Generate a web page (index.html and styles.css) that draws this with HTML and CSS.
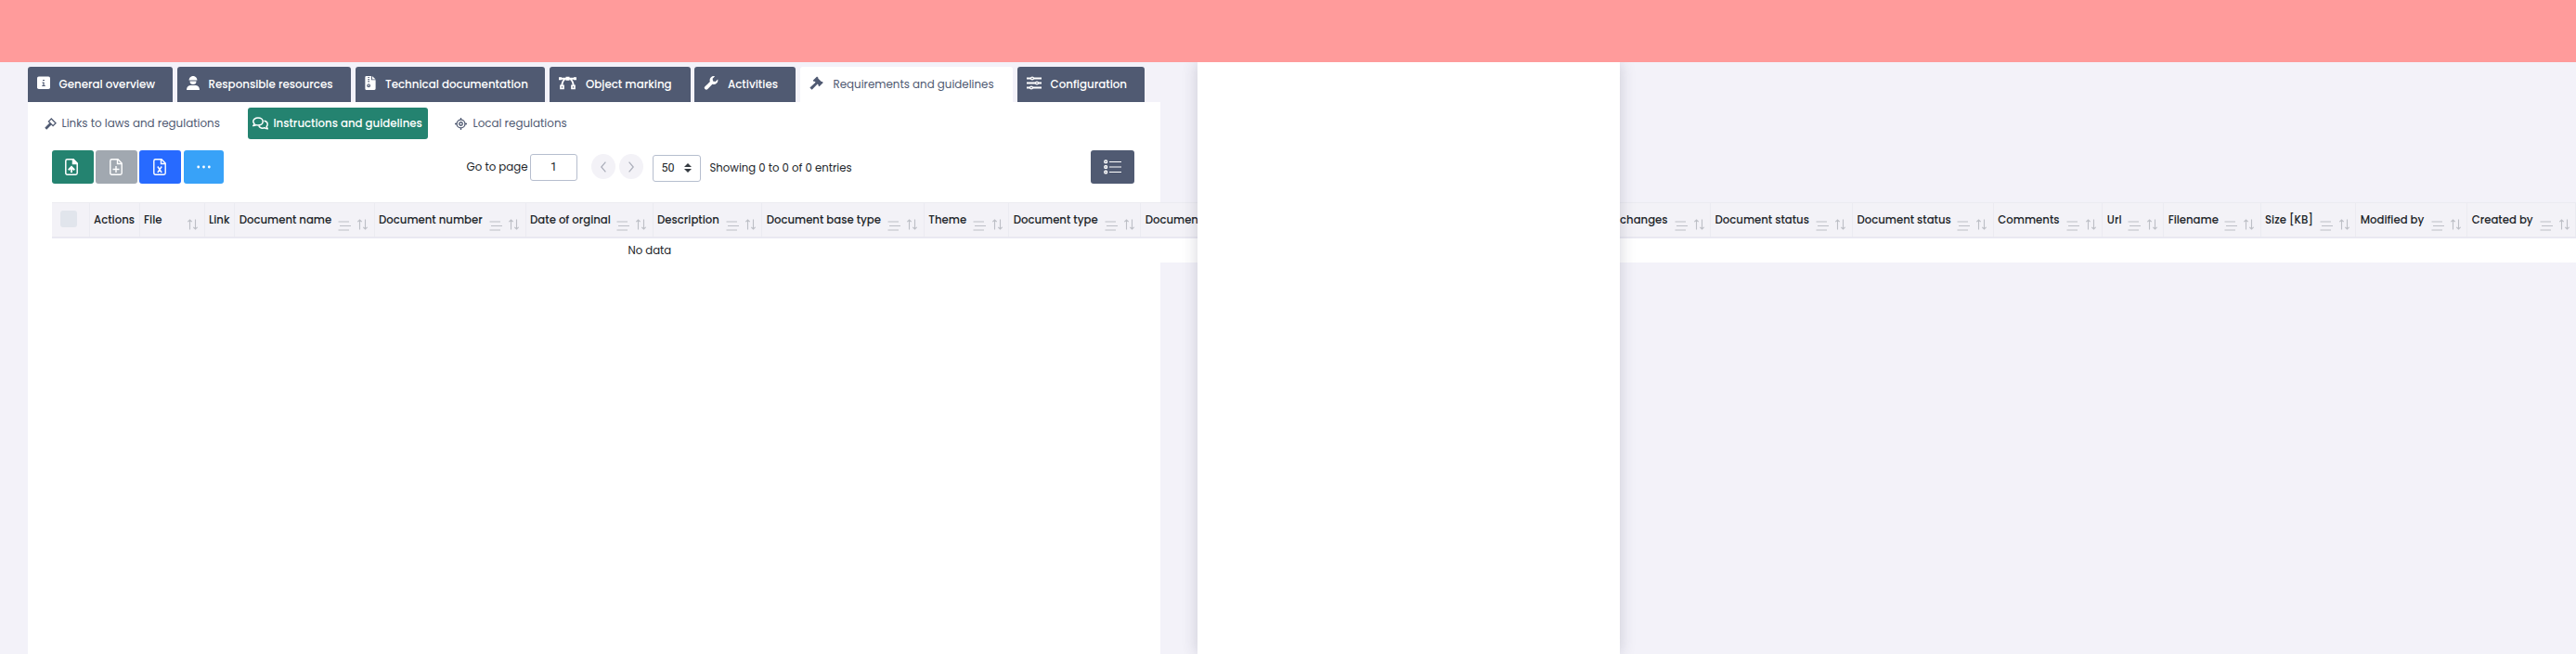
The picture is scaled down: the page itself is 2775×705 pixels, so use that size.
FILE: index.html
```html
<!DOCTYPE html>
<html lang="en">
<head>
<meta charset="utf-8">
<title>Requirements and guidelines</title>
<link rel="stylesheet" href="styles.css">
</head>
<body>
<svg class="defs" width="0" height="0">
  <symbol id="sort" viewBox="0 0 11 12"><path d="M2.500 11.500V1M.3 3.200 2.500 1l2.200 2.200M8.500.5V11M6.300 8.800 8.500 11l2.200-2.200" fill="none" stroke="currentColor" stroke-width="1.100"/></symbol>
  <symbol id="lines" viewBox="0 0 14 11"><path d="M.5 1h11.500M2 5.500h12M.5 10h11.500" fill="none" stroke="currentColor"/></symbol>
  <symbol id="gavel" viewBox="0 0 16 16"><path d="M8.600.5 4 5.100l1.200 1.200.8-.2 1 1L.4 13.200l2.400 2.400 6.500-6.500 1 1-.2.8 1.200 1.200 4.500-4.600-1.200-1.200-.9.200-3.800-3.800.2-.9z" fill="currentColor"/></symbol>
</svg>
<header class="banner"></header>
<main class="page">
  <nav class="tabs">
    <a class="tab t1"><svg class="ic" viewBox="0 0 14 14"><rect width="14" height="13.500" rx="1.800" fill="#fff"/><path d="M6 4h2M5.500 6.500H7V10M5.300 10h3.400" stroke="#505a72" stroke-width="1.200" fill="none"/></svg><span>General overview</span></a>
    <a class="tab t2"><svg class="ic" viewBox="0 0 14 15"><path d="M2.500 4.500C2.800 2 4.300.8 5.500.6V0h3v.6c1.200.2 2.700 1.400 3 3.900zM3.500 5.500h7a3.500 3.500 0 0 1-7 0zM0 15c0-3 1.500-4.800 4-5h6c2.500.2 4 2 4 5z" fill="#fff"/></svg><span>Responsible resources</span></a>
    <a class="tab t3"><svg class="ic" viewBox="0 0 14 16"><path d="M1 1.300Q1 0 2.300 0H8v4.500h5v10Q13 16 11.600 16H2.400Q1 16 1 14.600zM9 0l4 3.700H9z" fill="#fff"/><path d="M5 1v7" stroke="#505a72" stroke-width="1.600" stroke-dasharray="1.200 1"/><circle cx="5" cy="11" r="1.400" fill="none" stroke="#505a72" stroke-width="1.300"/></svg><span>Technical documentation</span></a>
    <a class="tab t4"><svg class="ic wide" viewBox="0 0 19 14"><path d="M1 2.200h17M7 2.500C4.500 4 3.500 6.500 3.300 10M12 2.500c2.500 1.500 3.500 4 3.700 7.500" stroke="#fff" stroke-width="1.900" fill="none"/><path d="M7.500.2h4v4h-4zM0 .7h3v3H0zM16 .7h3v3h-3z" fill="#fff"/><path d="M2 9.800h3v3H2zM14 9.800h3v3h-3z" fill="#505a72" stroke="#fff" stroke-width="1.700"/></svg><span>Object marking</span></a>
    <a class="tab t5"><svg class="ic" viewBox="0 0 16 16"><path d="M15.700 3.600a4.700 4.700 0 0 1-6.200 5.600L4.100 15a2.100 2.100 0 0 1-3.100-3.100l5.800-5.400A4.700 4.700 0 0 1 12.400.3L9.700 3l.5 2.800 2.800.5z" fill="#fff"/></svg><span>Activities</span></a>
    <a class="tab t6 active"><svg class="ic"><use href="#gavel"/></svg><span>Requirements and guidelines</span></a>
    <a class="tab t7"><svg class="ic" viewBox="0 0 16 14"><path d="M0 2h16M0 7h16M0 12h16" stroke="#fff" stroke-width="2"/><g fill="#505a72" stroke="#fff" stroke-width="1.300"><circle cx="6" cy="2" r="1.400"/><circle cx="11" cy="7" r="1.400"/><circle cx="5" cy="12" r="1.400"/></g></svg><span>Configuration</span></a>
  </nav>
  <section class="panel">
    <nav class="subtabs">
      <a class="sub s1"><svg width="13" height="13" viewBox="0 0 16 16" fill="none" stroke="currentColor" stroke-width="1.600"><path d="m9 1.200 5.800 5.800-3.600 3.600L5.400 4.800z"/><path d="M8.200 7.800 1.500 14.500" stroke-width="3.400"/></svg><span>Links to laws and regulations</span></a>
      <a class="sub s2"><svg width="17" height="14" viewBox="0 0 17 14" fill="none" stroke="currentColor" stroke-width="1.500"><path d="M6 1c3 0 5.200 1.700 5.200 4S9 9 6 9c-.8 0-1.500-.1-2.200-.4C3 9.200 2 9.500.9 9.500c.6-.7 1-1.400 1.100-2.100C1.200 6.700.8 5.900.8 5 .8 2.700 3 1 6 1z"/><path d="M12.500 4.300c2.200.4 3.700 1.800 3.700 3.700 0 .9-.3 1.600-1 2.300.1.800.5 1.600 1.100 2.500-1.200 0-2.200-.4-3-1-2.900.8-5.600-.1-6.500-2.300"/></svg><span>Instructions and guidelines</span></a>
      <a class="sub s3"><svg width="13" height="13" viewBox="0 0 14 14" fill="none" stroke="currentColor" stroke-width="1.400"><circle cx="7" cy="7" r="4.800"/><circle cx="7" cy="7" r="1.900"/><path d="M7 0v2.200M7 11.800V14M0 7h2.200M11.800 7H14"/></svg><span>Local regulations</span></a>
    </nav>
    <div class="toolbar">
      <div class="actions">
        <button class="btn green"><svg width="14" height="18" viewBox="0 0 14 18" fill="none" stroke="#fff" stroke-width="1.500"><path d="M2.500.8H9l4.200 4.200v10.500q0 1.700-1.700 1.700h-9q-1.700 0-1.700-1.700v-13Q.8.8 2.500.8z"/><path d="M8.500 1v4.500H13L9 1z" fill="#fff"/><path d="M7 15V9.800M3.800 12.300 7 9l3.200 3.300" stroke-width="2"/></svg></button>
        <button class="btn gray"><svg width="14" height="18" viewBox="0 0 14 18" fill="none" stroke="#fff" stroke-width="1.400"><path d="M2.500.8H9l4.200 4.200v10.500q0 1.700-1.700 1.700h-9q-1.700 0-1.700-1.700v-13Q.8.8 2.500.8zM8.500 1v4.500H13M7 8v7M3.500 11.500h7"/></svg></button>
        <button class="btn blue"><svg width="14" height="18" viewBox="0 0 14 18" fill="none" stroke="#fff" stroke-width="1.400"><path d="M2.500.8H9l4.200 4.200v10.500q0 1.700-1.700 1.700h-9q-1.700 0-1.700-1.700v-13Q.8.8 2.500.8zM8.500 1v4.500H13M4.800 8.500l4.400 6.500M9.200 8.500 4.800 15"/></svg></button>
        <button class="btn sky"><svg width="15" height="4" viewBox="0 0 15 4" fill="#fff"><circle cx="1.700" cy="2" r="1.400"/><circle cx="7.500" cy="2" r="1.400"/><circle cx="13.300" cy="2" r="1.400"/></svg></button>
      </div>
      <div class="pager">
        <span class="goto">Go to page</span>
        <span class="field">1</span>
        <span class="round first"><svg width="6" height="12" viewBox="0 0 6 12"><path d="M5.400.7.8 6l4.600 5.300" fill="none" stroke="#aaadb9" stroke-width="1.200"/></svg></span>
        <span class="round"><svg width="6" height="12" viewBox="0 0 6 12"><path d="M.6.7 5.200 6 .6 11.300" fill="none" stroke="#aaadb9" stroke-width="1.200"/></svg></span>
        <span class="select">50<svg width="8" height="10" viewBox="0 0 8 10"><path d="M0 4l4-4 4 4zM0 6l4 4 4-4z" fill="#343a40"/></svg></span>
        <span class="showing">Showing 0 to 0 of 0 entries</span>
      </div>
      <button class="btn list"><svg width="19" height="16" viewBox="0 0 19 16"><path d="M6 2.500h13M6 8h13M6 13.500h13" stroke="#fff" stroke-width="1.200"/><g fill="none" stroke="#fff" stroke-width="1.400"><rect x=".9" y="1" width="2.600" height="2.600" rx=".8"/><rect x=".9" y="6.700" width="2.600" height="2.600" rx=".8"/><rect x=".9" y="12.200" width="2.600" height="2.600" rx=".8"/></g></svg></button>
    </div>
    <div class="table">
      <div class="thead">
        <div class="th check"><i class="box"></i></div>
        <div class="th c-actions"><span>Actions</span></div>
        <div class="th c-file"><span>File</span><svg class="so"><use href="#sort"/></svg></div>
        <div class="th c-link"><span>Link</span></div>
        <div class="th c-name"><span>Document name</span><svg class="li"><use href="#lines"/></svg><svg class="so"><use href="#sort"/></svg></div>
        <div class="th c-number"><span>Document number</span><svg class="li"><use href="#lines"/></svg><svg class="so"><use href="#sort"/></svg></div>
        <div class="th c-date"><span>Date of orginal</span><svg class="li"><use href="#lines"/></svg><svg class="so"><use href="#sort"/></svg></div>
        <div class="th c-desc"><span>Description</span><svg class="li"><use href="#lines"/></svg><svg class="so"><use href="#sort"/></svg></div>
        <div class="th c-base"><span>Document base type</span><svg class="li"><use href="#lines"/></svg><svg class="so"><use href="#sort"/></svg></div>
        <div class="th c-theme"><span>Theme</span><svg class="li"><use href="#lines"/></svg><svg class="so"><use href="#sort"/></svg></div>
        <div class="th c-type"><span>Document type</span><svg class="li"><use href="#lines"/></svg><svg class="so"><use href="#sort"/></svg></div>
        <div class="th c-changes"><span>Document</span><span class="end">changes</span><svg class="li"><use href="#lines"/></svg><svg class="so"><use href="#sort"/></svg></div>
        <div class="th c-status"><span>Document status</span><svg class="li"><use href="#lines"/></svg><svg class="so"><use href="#sort"/></svg></div>
        <div class="th c-status2"><span>Document status</span><svg class="li"><use href="#lines"/></svg><svg class="so"><use href="#sort"/></svg></div>
        <div class="th c-comments"><span>Comments</span><svg class="li"><use href="#lines"/></svg><svg class="so"><use href="#sort"/></svg></div>
        <div class="th c-url"><span>Url</span><svg class="li"><use href="#lines"/></svg><svg class="so"><use href="#sort"/></svg></div>
        <div class="th c-filename"><span>Filename</span><svg class="li"><use href="#lines"/></svg><svg class="so"><use href="#sort"/></svg></div>
        <div class="th c-size"><span>Size [KB]</span><svg class="li"><use href="#lines"/></svg><svg class="so"><use href="#sort"/></svg></div>
        <div class="th c-modified"><span>Modified by</span><svg class="li"><use href="#lines"/></svg><svg class="so"><use href="#sort"/></svg></div>
        <div class="th c-created"><span>Created by</span><svg class="li"><use href="#lines"/></svg><svg class="so"><use href="#sort"/></svg></div>
      </div>
      <div class="empty">No data</div>
    </div>
  </section>
  <aside class="drawer"></aside>
</main>
</body>
</html>
```
FILE: styles.css
```css
* { box-sizing: border-box; }
body {
  margin: 0;
  height: 705px;
  overflow: hidden;
  background: #f3f2f9;
  color: #212529;
  font: 400 11.700px/20px Poppins, Inter, "Open Sans", sans-serif;
  white-space: nowrap;
}
.defs { display: none; }
.banner { height: 67px; background: #ff9b9b; }
.page { position: relative; height: 638px; padding: 5px 0 0 30px; overflow: hidden; }

/* Main tabs */
.tabs { display: flex; gap: 5px; height: 38px; font-size: 11.850px; }
.tab {
  display: flex;
  align-items: center;
  padding: 0 0 1px 10px;
  border-radius: 3px 3px 0 0;
  background: #505a72;
  color: #fff;
  font-weight: 500;
}
.tab .ic { flex: none; width: 14px; height: 15px; margin: 0 9.500px 3px 0; }
.tab .ic.wide { width: 19px; margin-right: 10px; }
.t1 { width: 156px; }
.t2 { width: 187px; }
.t3 { width: 204px; }
.t3 .ic { margin-left: -1px; margin-right: 9px; }
.t4 { width: 152px; margin-right: -1px; }
.t5 { width: 109px; }
.t5 .ic { width: 16px; margin-right: 10px; }
.t6 { width: 229px; }
.t6 .ic { width: 15px; margin-right: 10.500px; }
.t7 { width: 137.300px; }
.t7 .ic { width: 16px; }
.tab.active { background: #fff; color: #505a72; font-weight: 400; }

/* Content panel */
.panel { width: 1220px; height: 595px; background: #fff; }
.subtabs { display: flex; padding: 6px 0 0 10px; height: 40px; color: #505a72; font-size: 11.900px; }
.sub { display: flex; align-items: center; height: 34px; padding-left: 8px; }
.sub svg { flex: none; margin-right: 5.500px; }
.s1 { width: 226.500px; }
.s2 { width: 194.500px; padding-left: 5.500px; border-radius: 3px; background: #248370; color: #fff; font-weight: 500; font-size: 11.750px; }
.s3 { padding-left: 29px; }
.s3 svg { margin-right: 6.500px; }

.toolbar { display: flex; height: 68px; padding: 12px 28.500px 0 26px; }
.actions { display: flex; gap: 2.500px; width: 446px; }
.btn { display: flex; align-items: center; justify-content: center; width: 44.700px; height: 36px; padding: 0 2px 0 0; border: 0; border-radius: 3px; }
.green { background: #248370; }
.gray { background: #a1a8b0; }
.blue { background: #276aff; }
.sky { width: 43px; padding: 0; background: #38a2f8; }
.list { width: 46.500px; padding: 0; margin-left: auto; background: #505a72; }
.pager { display: flex; align-items: center; height: 36px; }
.goto { width: 69px; padding-left: .5px; font-size: 11.800px; }
.field, .select { display: flex; align-items: center; justify-content: center; height: 29px; border: 1px solid #b6bece; border-radius: 3px; background: #fff; font-family: Roboto, "Liberation Sans", sans-serif; font-size: 12.500px; }
.field { width: 51px; margin-right: 15px; }
.round { display: flex; align-items: center; justify-content: center; width: 26px; height: 27px; margin: 0 9.500px 1px 0; border-radius: 50%; background: #f3f2f7; }
.round.first { margin-right: 4px; }
.select { width: 52px; gap: 10px; margin: 2px 10px 0 0; }
.showing { padding-top: 2px; }

/* Documents table */
.table { width: 2719px; margin-left: 26px; position: relative; background: #fff; }
.thead { display: flex; height: 39px; border-top: 1px solid #ebebf1; border-bottom: 2px solid #e9e8f1; background: #f3f2f7; }
.th { display: flex; flex: none; padding: 8px 6.500px 0 4.500px; border-right: 1px solid #ebebf1; font-weight: 500; }
.th span { margin-right: auto; }
.th svg { flex: none; color: #bdbfc6; }
.so { width: 11px; height: 12px; margin-top: 9px; }
.li { width: 14px; height: 11px; margin: 11px 7px 0 0; }
.check { width: 40.600px; padding-left: 9px; }
.box { width: 18px; height: 18px; border-radius: 3px; background: #e1e5ec; }
.c-actions { width: 54px; }
.c-file { width: 70px; }
.c-link { width: 32.600px; }
.c-name { width: 150.400px; }
.c-number { width: 163px; }
.c-date { width: 137px; }
.c-desc { width: 117.600px; }
.c-base { width: 174.700px; }
.c-theme { width: 91.300px; }
.c-type { width: 142px; }
.c-changes { width: 613.900px; }
.c-changes .end { margin: 0 7px 0 auto; }
.c-status { width: 152.900px; }
.c-status2 { width: 151.900px; }
.c-comments { width: 117.500px; }
.c-url { width: 65.800px; }
.c-filename { width: 104.400px; }
.c-size { width: 102.700px; }
.c-modified { width: 120px; }
.c-created { width: 117px; }
.empty { height: 26px; padding: 3px 0 0 620.500px; }

/* Side drawer laid over the content */
.drawer { position: absolute; top: 0; left: 1290px; width: 455px; height: 638px; background: #fff; box-shadow: 0 0 16px rgba(40, 42, 70, .2); }
```
